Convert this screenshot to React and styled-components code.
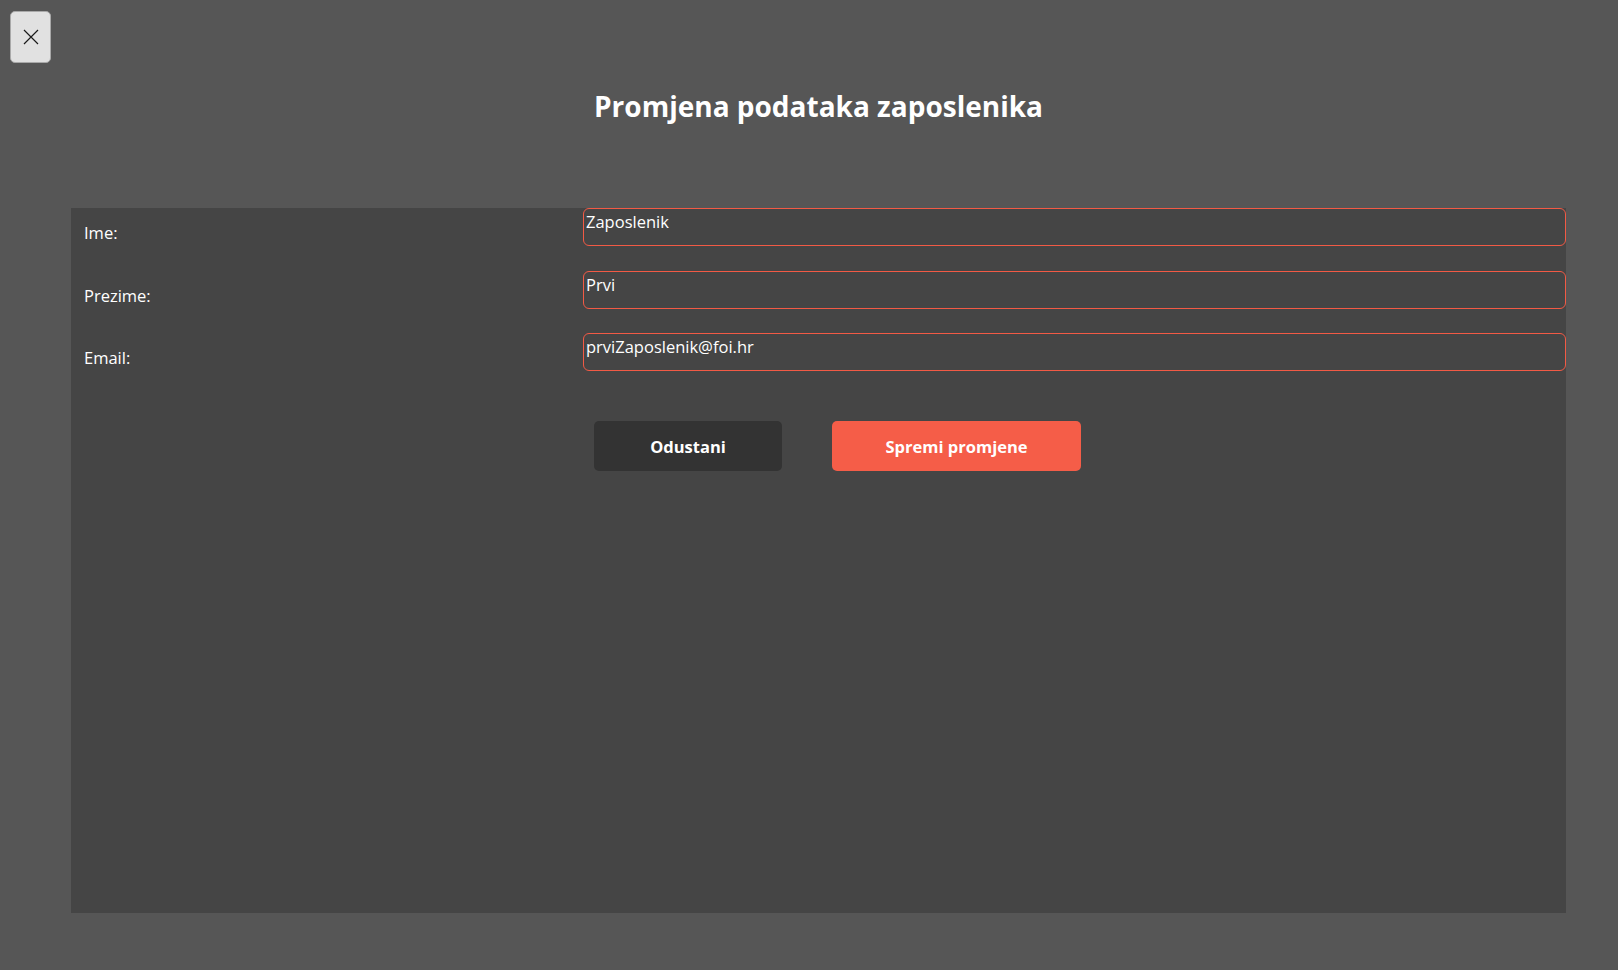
import React from "react";
import styled, { createGlobalStyle } from "styled-components";

const GlobalStyle = createGlobalStyle`
  html, body {
    margin: 0;
    padding: 0;
    background: #565656;
    font-family: "Open Sans", "Noto Sans", sans-serif;
  }
  * {
    box-sizing: border-box;
  }
`;

const Page = styled.div`
  min-height: 970px;
  display: flex;
  flex-direction: column;
  padding: 11px 52px 57px 10px;
`;

const CloseButton = styled.button`
  width: 41px;
  height: 52px;
  display: flex;
  align-items: center;
  justify-content: center;
  padding: 0;
  background: #e1e1e1;
  border: 1px solid #a9a9a9;
  border-radius: 5px;
  cursor: pointer;
`;

const Content = styled.div`
  margin-left: 61px;
  display: flex;
  flex-direction: column;
  flex: 1;
`;

const Title = styled.h1`
  margin: 24px 0 0;
  height: 121px;
  text-align: center;
  color: #ffffff;
  font-size: 28px;
  font-weight: 700;
  line-height: 38px;
`;

const Panel = styled.div`
  flex: 1;
  background: #454545;
  display: flex;
  flex-direction: column;
`;

const Row = styled.div`
  display: grid;
  grid-template-columns: 512px 1fr;
  height: 62.5px;
`;

const Label = styled.label`
  padding: 13px 0 0 13px;
  color: #ffffff;
  font-size: 16.5px;
`;

const Field = styled.input`
  height: 38px;
  width: 100%;
  margin: 0;
  padding: 0 0 11px 2px;
  background: #454545;
  border: 1px solid #f25a45;
  border-radius: 6px;
  color: #ffffff;
  font-family: inherit;
  font-size: 16.5px;
  outline: none;
`;

const Actions = styled.div`
  display: flex;
  gap: 50px;
  margin: 25px 0 0 523px;
`;

const ActionButton = styled.button`
  width: ${(p) => (p.$primary ? "249px" : "188px")};
  height: 50px;
  padding: 2px 0 0;
  border: none;
  border-radius: 5px;
  background: ${(p) => (p.$primary ? "#f55d48" : "#333333")};
  color: #ffffff;
  font-family: inherit;
  font-size: 16.5px;
  font-weight: 700;
  cursor: pointer;
`;

const fields = [
  { label: "Ime:", value: "Zaposlenik" },
  { label: "Prezime:", value: "Prvi" },
  { label: "Email:", value: "prviZaposlenik@foi.hr" },
];

const App = () => {
  return (
    <>
      <GlobalStyle />
      <Page>
        <CloseButton aria-label="Zatvori">
          <svg width="16" height="16" viewBox="0 0 16 16">
            <path d="M1 1 L15 15 M15 1 L1 15" stroke="#1a1a1a" strokeWidth="1.2" />
          </svg>
        </CloseButton>
        <Content>
          <Title>Promjena podataka zaposlenika</Title>
          <Panel>
            {fields.map((f) => (
              <Row key={f.label}>
                <Label>{f.label}</Label>
                <Field defaultValue={f.value} />
              </Row>
            ))}
            <Actions>
              <ActionButton>Odustani</ActionButton>
              <ActionButton $primary>Spremi promjene</ActionButton>
            </Actions>
          </Panel>
        </Content>
      </Page>
    </>
  );
};

export default App;
